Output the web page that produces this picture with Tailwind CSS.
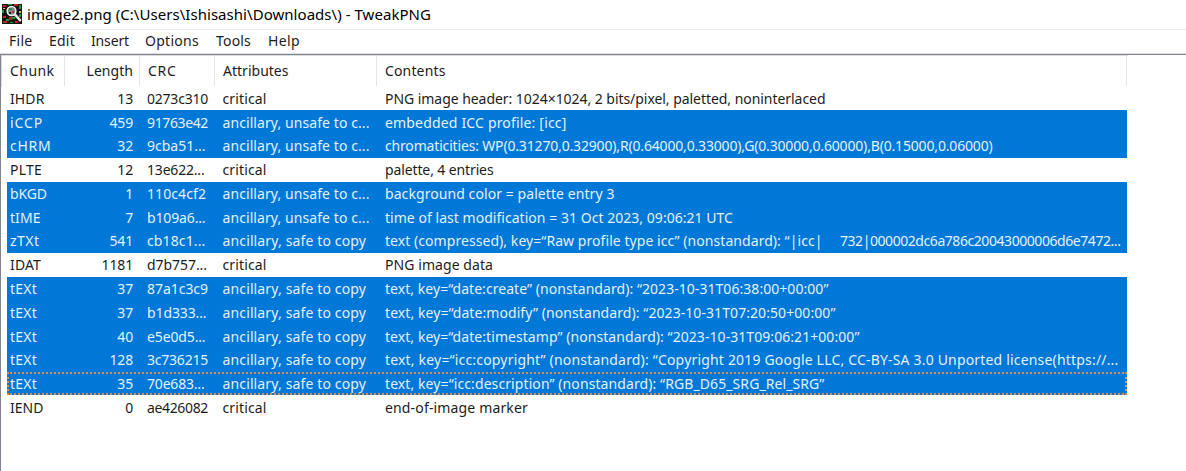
<!DOCTYPE html>
<html lang="en">
<head>
<meta charset="utf-8">
<title>TweakPNG</title>
<script src="https://cdn.jsdelivr.net/npm/@tailwindcss/browser@4"></script>
</head>
<body class="h-screen overflow-hidden bg-white font-['Noto_Sans','Open_Sans',sans-serif] text-[14px] text-[#1c1c1c]">
<div class="flex h-full flex-col">
  <header class="flex h-[29px] shrink-0 items-center pl-[2px]">
    <svg class="mb-px size-5 shrink-0" viewBox="0 0 20 20">
      <path fill="#141414" d="M0 0h20v20H0z"/>
      <path fill="#c32020" d="M1 1h3v2H1zM12 0h4v2h-4zM1 12h3v2H1zM7 13h3v3H7zM1 17h4v2H1zM13 17h3v2h-3z"/>
      <path fill="#239a35" d="M6 0h4v1H6zM17 1h2v4h-2zM0 6h2v3H0zM4 15h3v2H4zM10 13h3v2h-3zM17 10h2v3h-2zM8 18h3v1H8z"/>
      <path fill="#d5bd3b" d="M17 7h2v2h-2zM1 4h2v1H1z"/>
      <circle cx="9.5" cy="7" r="4.4" fill="#8a8a8a" stroke="#f1f1f1" stroke-width="1.5"/>
      <path fill="#2d8b43" d="M7 4h3v2H7z"/><path fill="#b63a3a" d="M10 7h2v2h-2z"/><path fill="#222" d="M7 8h2v2H7z"/>
      <path stroke="#e8e8e8" stroke-width="2.6" stroke-linecap="round" d="m13 10.7 5 5.5"/>
    </svg>
    <h1 class="ml-[5px] whitespace-pre text-[15px] text-black" data-w="404">image2.png (C:\Users\Ishisashi\Downloads\) - TweakPNG</h1>
  </header>
  <nav class="flex h-[24px] shrink-0 items-center border-t border-[#ebebeb] pb-[2px] pl-[9px]">
    <span class="w-10" data-w="23.5">File</span><span class="w-[42px]" data-w="26">Edit</span><span class="w-[54px]" data-w="38">Insert</span><span class="w-[71px]" data-w="54">Options</span><span class="w-[52px]" data-w="35">Tools</span><span data-w="32">Help</span>
  </nav>
  <div class="flex flex-1 border-t border-[#dcdcde]">
  <main class="flex-1 border-t border-l border-[#82858d]">
    <div class="flex h-[31.5px] w-[1127px] items-center border-t border-l border-[#dcdcde] leading-[30px]">
      <div class="w-[63px] border-r border-[#e5e5e5] pl-[8px]"><span data-w="44.5">Chunk</span></div>
      <div class="w-[75px] border-r border-[#e5e5e5] pr-[6px] text-right"><span data-w="46.5">Length</span></div>
      <div class="w-[75px] border-r border-[#e5e5e5] pl-[8px]"><span data-w="28.5">CRC</span></div>
      <div class="w-[162px] border-r border-[#e5e5e5] pl-[8px]"><span data-w="65.5">Attributes</span></div>
      <div class="w-[750px] border-r border-[#e5e5e5] pl-[8px]"><span data-w="60.5">Contents</span></div>
    </div>
    <div id="rows" class="ml-[6px] w-[1120px]"></div>
  </main>
  </div>
</div>
<script>
const unsafe = ['ancillary, unsafe to c...', 147], safe = ['ancillary, safe to copy', 143.5], critical = ['critical', 44];
// state, [chunk, width], length, [crc, width], attributes, ...[contents, width]
const rows = [
  [0, ['IHDR', 34.5], '13', ['0273c310', 61], critical, ['PNG image header: 1024×1024, 2 bits/pixel, paletted, noninterlaced', 440.5]],
  [1, ['iCCP', 33], '459', ['91763e42', 61], unsafe, ['embedded ICC profile: [icc]', 181.5]],
  [1, ['cHRM', 41.5], '32', ['9cba51...', 58.5], unsafe, ['chromaticities: WP(0.31270,0.32900),R(0.64000,0.33000),G(0.30000,0.60000),B(0.15000,0.06000)', 607.5]],
  [0, ['PLTE', 32], '12', ['13e622...', 57.5], critical, ['palette, 4 entries', 108.5]],
  [1, ['bKGD', 37], '1', ['110c4cf2', 59], unsafe, ['background color = palette entry 3', 229.5]],
  [1, ['tIME', 30.5], '7', ['b109a6...', 58.5], unsafe, ['time of last modification = 31 Oct 2023, 09:06:21 UTC', 348]],
  [1, ['zTXt', 29.5], '541', ['cb18c1...', 58.5], safe, ['text (compressed), key=“Raw profile type icc” (nonstandard): “|icc|', 437.5], ['     ', 17.5], ['732|000002dc6a786c20043000006d6e7472...', 280.5]],
  [0, ['IDAT', 31], '1181', ['d7b757...', 60], critical, ['PNG image data', 108]],
  [1, ['tEXt', 27], '37', ['87a1c3c9', 61], safe, ['text, key=“date:create” (nonstandard): “2023-10-31T06:38:00+00:00”', 443.5]],
  [1, ['tEXt', 27], '37', ['b1d333...', 59.5], safe, ['text, key=“date:modify” (nonstandard): “2023-10-31T07:20:50+00:00”', 450.5]],
  [1, ['tEXt', 27], '40', ['e5e0d5...', 58.5], safe, ['text, key=“date:timestamp” (nonstandard): “2023-10-31T09:06:21+00:00”', 474.5]],
  [1, ['tEXt', 27], '128', ['3c736215', 61], safe, ['text, key=“icc:copyright” (nonstandard): “Copyright 2019 Google LLC, CC-BY-SA 3.0 Unported license(https://...', 733.5]],
  [2, ['tEXt', 27], '35', ['70e683...', 57.5], safe, ['text, key=“icc:description” (nonstandard): “RGB_D65_SRG_Rel_SRG”', 439.5]],
  [0, ['IEND', 33.5], '0', ['ae426082', 61], critical, ['end-of-image marker', 143]],
];
const states = ['', 'bg-[#0078d7] text-[#e4f1fb]', 'bg-[#0078d7] text-[#e4f1fb] outline-2 outline-dotted outline-[#d98a4c] -outline-offset-2'];
const fitted = ([text, width]) => `<span data-w="${width}">${text}</span>`;
document.getElementById('rows').innerHTML = rows.map(([state, chunk, length, crc, attributes, ...contents]) => `
  <div class="flex h-[23.77px] items-center whitespace-pre ${states[state]}"><div class="w-[58px] pl-[3px]">${fitted(chunk)}</div><div class="w-[75px] pr-[7px] text-right tracking-[-0.15px]">${length}</div><div class="w-[75px] pl-[7px]">${fitted(crc)}</div><div class="w-[163px] pl-[7.5px]">${fitted(attributes)}</div><div class="w-[749px] pl-[7px]">${contents.map(fitted).join('')}</div></div>`).join('');
function fit() {
  document.querySelectorAll('[data-w]').forEach(el => {
    el.style.letterSpacing = '0px';
    const range = document.createRange();
    range.selectNodeContents(el);
    const gap = (Number(el.dataset.w) - range.getBoundingClientRect().width) / el.textContent.length;
    el.style.letterSpacing = gap.toFixed(3) + 'px';
  });
}
window.addEventListener('load', () => { fit(); requestAnimationFrame(fit); });
</script>
</body>
</html>
